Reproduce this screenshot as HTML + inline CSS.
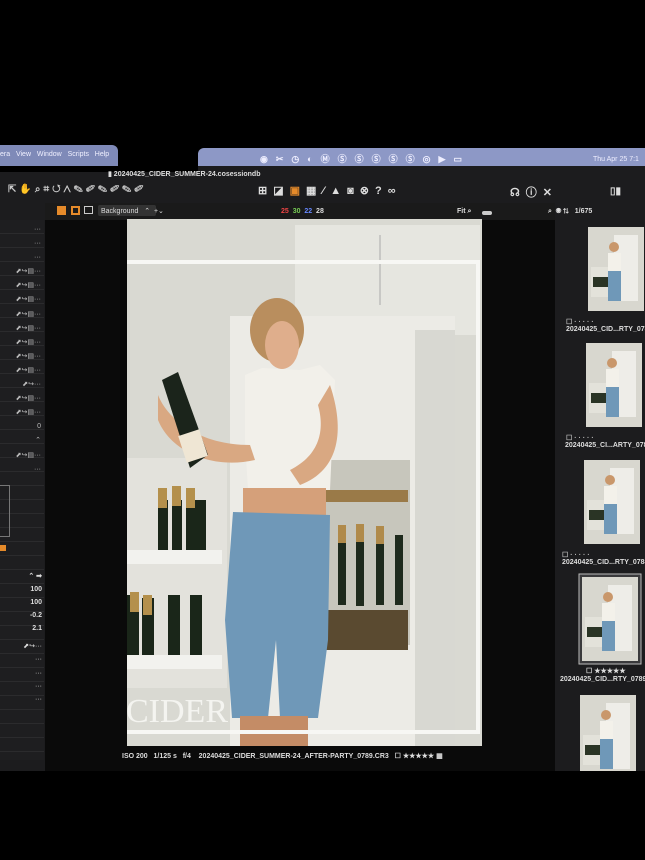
<!DOCTYPE html>
<html><head><meta charset="utf-8"><style>
*{margin:0;padding:0;box-sizing:border-box}
body{width:645px;height:860px;background:#000;position:relative;overflow:hidden;font-family:"Liberation Sans",sans-serif}
.a{position:absolute}
.t{position:absolute;color:#ddd;font-size:7px;font-weight:bold;white-space:nowrap}
</style></head><body>
<div class="a" style="left:0;top:145px;width:118px;height:21px;background:#7f8ab8;border-radius:0 6px 0 0"></div>
<div class="t" style="left:0;top:151px;color:#f0f0ff;font-weight:normal;font-size:7px">era&nbsp;&nbsp;&nbsp;View&nbsp;&nbsp;&nbsp;Window&nbsp;&nbsp;&nbsp;Scripts&nbsp;&nbsp;&nbsp;Help</div>
<div class="a" style="left:198px;top:148px;width:447px;height:22px;background:#8d98c6;border-radius:6px 0 0 0"></div>
<div class="t" style="left:260px;top:152px;color:#eef;font-size:9px;letter-spacing:8px">◉✂◷◐ⓂⓈⓈⓈⓈⓈ◎▶▭</div>
<div class="t" style="left:593px;top:156px;color:#eef;font-weight:normal">Thu Apr 25  7:1</div>
<div class="a" style="left:0;top:166px;width:645px;height:605px;background:#1c1c1e"></div>
<div class="a" style="left:0;top:166px;width:198px;height:6px;background:#000"></div>
<div class="t" style="left:108px;top:170px;font-size:7px">▮ 20240425_CIDER_SUMMER-24.cosessiondb</div>
<div class="t" style="left:8px;top:184px;color:#ccc;font-size:10px;letter-spacing:3px">⇱<span style="color:#e58a2a">✋</span>⌕⌗↺⋀✎✐✎✐✎✐</div>
<div class="t" style="left:258px;top:184px;color:#ddd;font-size:11px;letter-spacing:6px">⊞◪<span style="color:#e58a2a">▣</span>▦⁄▲◙⊗?∞</div>
<div class="t" style="left:510px;top:184px;color:#ddd;font-size:11px;letter-spacing:6px">☊ⓘ✕</div>
<div class="t" style="left:610px;top:186px;color:#ddd;font-size:10px">▯▮</div>
<div class="a" style="left:45px;top:203px;width:510px;height:17px;background:#1a1a1a"></div>
<div class="a" style="left:57px;top:206px;width:9px;height:9px;background:#e58a2a"></div>
<div class="a" style="left:71px;top:206px;width:9px;height:9px;border:2px solid #e58a2a"></div>
<div class="a" style="left:84px;top:206px;width:9px;height:8px;border:1.5px solid #ccc"></div>
<div class="a" style="left:98px;top:205px;width:58px;height:11px;background:#333;border-radius:2px"></div>
<div class="t" style="left:101px;top:207px;font-weight:normal">Background&nbsp;&nbsp;&nbsp;⌃ &nbsp;+⌄</div>
<div class="t" style="left:281px;top:208px"><span style="color:#e44">25</span>&nbsp;&nbsp;<span style="color:#7c5">30</span>&nbsp;&nbsp;<span style="color:#68f">22</span>&nbsp;&nbsp;28</div>
<div class="t" style="left:457px;top:208px">Fit ⌕</div>
<div class="a" style="left:482px;top:211px;width:10px;height:4px;background:#ccc;border-radius:2px"></div>
<div class="t" style="left:548px;top:208px">⌕ &nbsp;◉ ⇅ &nbsp;&nbsp;1/675</div>
<div class="a" style="left:0;top:220px;width:44px;height:540px;background:repeating-linear-gradient(#1e1e20 0 13px,#2b2b2d 13px 14px)"></div>
<div class="t" style="left:0;top:223px;width:44px;height:400px;font-weight:normal;color:#bbb;line-height:14.1px;text-align:right;padding-right:3px">···<br>···<br>···<br>⬈↪▤···<br>⬈↪▤···<br>⬈↪▤···<br>⬈↪▤···<br>⬈↪▤···<br>⬈↪▤···<br>⬈↪▤···<br>⬈↪▤···<br>⬈↪···<br>⬈↪▤···<br>⬈↪▤···<br>0<br>⌃<br>⬈↪▤···<br>···</div>
<div class="a" style="left:0;top:485px;width:10px;height:52px;border:1px solid #777;border-left:none"></div>
<div class="a" style="left:0;top:545px;width:6px;height:6px;background:#e58a2a"></div>
<div class="t" style="left:0;top:570px;width:42px;text-align:right;line-height:13px">⌃ ➡<br>100<br>100<br>-0.2<br>2.1</div>
<div class="t" style="left:0;top:640px;width:42px;text-align:right;line-height:13.3px;font-weight:normal">⬈↪···<br>···<br>···<br>···<br>···</div>
<div class="a" style="left:45px;top:220px;width:510px;height:551px;background:#0a0a0a"></div>
<svg class="a" style="left:127px;top:219px" width="355" height="527" viewBox="127 219 355 527">
<rect x="127" y="219" width="355" height="539" fill="#d9d9d2"/>
<rect x="295" y="225" width="185" height="110" fill="#e6e6e0"/>
<line x1="380" y1="235" x2="380" y2="305" stroke="#aaa"/>
<rect x="230" y="316" width="225" height="440" fill="#ecebe6"/>
<rect x="415" y="330" width="40" height="425" fill="#d8d8d2"/>
<rect x="315" y="460" width="95" height="185" fill="#c7c6bc"/>
<g fill="#1e2a1c"><rect x="320" y="525" width="8" height="80"/><rect x="338" y="530" width="8" height="75"/><rect x="356" y="528" width="8" height="78"/><rect x="376" y="530" width="8" height="75"/><rect x="395" y="535" width="8" height="70"/></g>
<g fill="#b08a4a"><rect x="320" y="520" width="8" height="18"/><rect x="338" y="525" width="8" height="18"/><rect x="356" y="524" width="8" height="18"/><rect x="376" y="526" width="8" height="18"/></g>
<rect x="318" y="490" width="90" height="12" fill="#9a7a48"/>
<rect x="318" y="610" width="90" height="40" fill="#5a4a30"/>
<rect x="127" y="458" width="100" height="230" fill="#e3e2dc"/>
<g fill="#1a2619"><rect x="158" y="500" width="10" height="52"/><rect x="172" y="500" width="10" height="52"/><rect x="186" y="500" width="10" height="52"/><rect x="196" y="500" width="10" height="52"/>
<rect x="127" y="595" width="12" height="60"/><rect x="142" y="598" width="12" height="58"/><rect x="168" y="595" width="12" height="60"/><rect x="190" y="595" width="12" height="60"/></g>
<g fill="#b4904c"><rect x="158" y="488" width="9" height="20"/><rect x="172" y="486" width="9" height="20"/><rect x="186" y="488" width="9" height="20"/><rect x="130" y="592" width="9" height="20"/><rect x="143" y="595" width="9" height="20"/></g>
<rect x="127" y="550" width="95" height="14" fill="#f2f2ee"/><rect x="127" y="655" width="95" height="14" fill="#f2f2ee"/>
<ellipse cx="277" cy="330" rx="27" ry="32" fill="#b98e5e"/>
<ellipse cx="282" cy="345" rx="17" ry="24" fill="#dfae8c"/>
<path d="M245 375 L262 368 L300 370 L320 365 L335 380 L330 490 L248 490 L245 440 Z" fill="#f2f0ea"/>
<path d="M158 395 C168 420 200 445 250 445 L255 460 C210 470 170 450 158 420Z" fill="#d9a882"/>
<path d="M330 385 C345 430 340 470 300 485 L290 470 C320 455 325 430 318 405Z" fill="#d9a882"/>
<rect x="243" y="488" width="83" height="28" fill="#d5a07a"/>
<path d="M233 512 L330 515 L328 640 L318 718 L280 718 L276 640 L268 718 L232 718 L225 620 Z" fill="#6f98b8"/>
<rect x="240" y="716" width="68" height="42" fill="#c48c66"/>
<path d="M162 380 L178 372 L208 455 L190 468 Z" fill="#1b241b"/>
<rect x="182" y="432" width="22" height="28" fill="#efe6d4" transform="rotate(-18 193 446)"/>
<rect x="122" y="262" width="356" height="470" fill="none" stroke="#f7f7f4" stroke-width="4"/>
<text x="126" y="722" font-family="Liberation Serif,serif" font-size="34" fill="#f4f4f0">CIDER</text>
</svg>
<div class="t" style="left:122px;top:752px;font-size:7px">ISO 200 &nbsp;&nbsp;1/125 s &nbsp;&nbsp;f/4 &nbsp;&nbsp;&nbsp;20240425_CIDER_SUMMER-24_AFTER-PARTY_0789.CR3 &nbsp;&nbsp;☐ ★★★★★ ▦</div>
<div class="a" style="left:556px;top:220px;width:89px;height:551px;background:#1c1c1e"></div>
<svg class="a" style="left:556px;top:220px" width="89" height="551">
<defs><g id="th"><rect width="56" height="84" fill="#d8d7cf"/><rect x="26" y="8" width="24" height="66" fill="#eeede8"/><rect x="3" y="40" width="20" height="30" fill="#e3e2da"/><rect x="5" y="50" width="16" height="10" fill="#2a3425"/><circle cx="26" cy="20" r="5" fill="#c9976b"/><rect x="20" y="26" width="13" height="18" fill="#f3f1ea"/><rect x="20" y="44" width="13" height="30" fill="#6f98b8"/></g></defs>
<use href="#th" x="32" y="7"/><use href="#th" x="30" y="123"/><use href="#th" x="28" y="240"/>
<rect x="23" y="354" width="62" height="90" fill="#3a3a3c" stroke="#bbb"/><use href="#th" x="26" y="357"/>
<use href="#th" x="24" y="475"/>
</svg>
<div class="t" style="left:566px;top:318px;color:#bbb">☐ · · · · ·</div>
<div class="t" style="left:566px;top:326px">20240425_CID...RTY_078</div>
<div class="t" style="left:566px;top:434px;color:#bbb">☐ · · · · ·</div>
<div class="t" style="left:565px;top:442px">20240425_CI...ARTY_078</div>
<div class="t" style="left:562px;top:551px;color:#bbb">☐ · · · · ·</div>
<div class="t" style="left:562px;top:559px">20240425_CID...RTY_0788</div>
<div class="t" style="left:586px;top:667px;color:#ddd">☐ ★★★★★</div>
<div class="t" style="left:560px;top:676px">20240425_CID...RTY_0789.</div>
</body></html>
